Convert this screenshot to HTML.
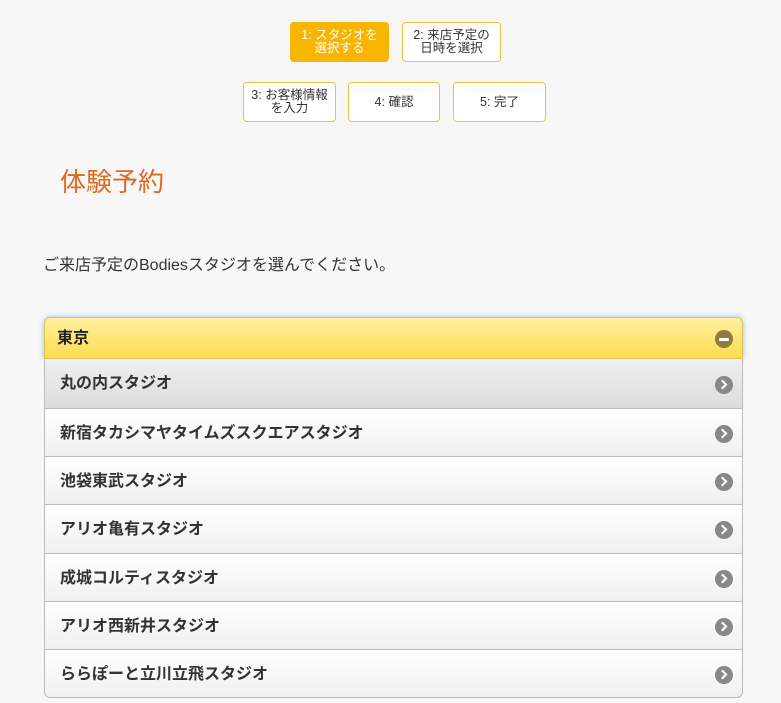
<!DOCTYPE html>
<html><head><meta charset="utf-8"><style>
body{margin:0;background:#f7f7f7;font-family:"Liberation Sans","Noto Sans CJK JP",sans-serif;width:781px;height:703px;overflow:hidden;position:relative;color:#333}
.s{position:absolute;box-sizing:border-box;border:1px solid #f0c040;border-radius:4px;background:#fff;font-size:12.5px;line-height:13px;text-align:center;display:flex;align-items:center;justify-content:center;color:#333}
.s.a{background:#f7b500;border-color:#f7b500;color:#fff}
h1{position:absolute;left:60px;top:162px;margin:0;font-size:26px;font-weight:normal;color:#e06820}
p{position:absolute;left:43px;top:251px;margin:0;font-size:16px}
.list{position:absolute;left:44px;top:317px;width:699px}
.hd{height:42px;box-sizing:border-box;border:1px solid #e0c050;border-radius:6px 6px 0 0;background:linear-gradient(#fff0a0,#fcdc50);box-shadow:0 0 6px #9cc0e0;font-weight:bold;font-size:16px;line-height:42px;padding-left:12px;position:relative;color:#222}
.it{height:48px;box-sizing:border-box;border:1px solid #bbb;border-top:none;background:linear-gradient(#fff,#f0f0f0);font-weight:bold;font-size:16px;line-height:49px;padding-left:15px;position:relative;color:#333}
.it.g{background:linear-gradient(#f0f0f0,#dcdcdc);height:50px;line-height:50px}
.it.t{height:49px}
.it:last-child{border-radius:0 0 6px 6px}
.ic{position:absolute;right:9px;top:50%;margin-top:-8px;width:18px;height:18px;border-radius:50%;background:#888}
.ic:after{content:"";position:absolute;left:4px;top:5px;width:5px;height:5px;border-right:2.5px solid #fff;border-top:2.5px solid #fff;transform:rotate(45deg)}
.hd .ic{background:#8d7c3a;margin-top:-8px}
.hd .ic:after{left:4px;top:7.5px;width:10px;height:3px;border:none;background:#fff;transform:none;border-radius:1px}
</style></head><body>
<div class="s a" style="left:290px;top:22px;width:99px;height:40px">1: スタジオを<br>選択する</div>
<div class="s" style="left:402px;top:22px;width:99px;height:40px">2: 来店予定の<br>日時を選択</div>
<div class="s" style="left:243px;top:82px;width:93px;height:40px">3: お客様情報<br>を入力</div>
<div class="s" style="left:348px;top:82px;width:92px;height:40px">4: 確認</div>
<div class="s" style="left:453px;top:82px;width:93px;height:40px">5: 完了</div>
<h1>体験予約</h1>
<p>ご来店予定のBodiesスタジオを選んでください。</p>
<div class="list">
<div class="hd">東京<span class="ic"></span></div>
<div class="it g">丸の内スタジオ<span class="ic"></span></div>
<div class="it">新宿タカシマヤタイムズスクエアスタジオ<span class="ic"></span></div>
<div class="it">池袋東武スタジオ<span class="ic"></span></div>
<div class="it t">アリオ亀有スタジオ<span class="ic"></span></div>
<div class="it">成城コルティスタジオ<span class="ic"></span></div>
<div class="it">アリオ西新井スタジオ<span class="ic"></span></div>
<div class="it">ららぽーと立川立飛スタジオ<span class="ic"></span></div>
</div>
</body></html>
